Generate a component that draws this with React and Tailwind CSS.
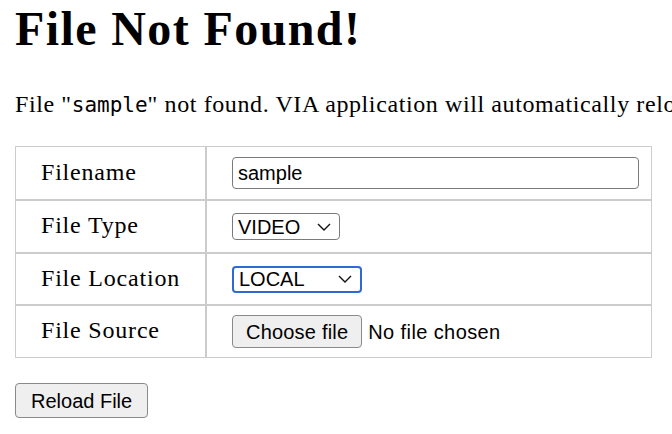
import React from 'react';

const serif = { fontFamily: '"Liberation Serif", "Times New Roman", serif' };

function Chevron() {
    return (
        <svg width="14" height="8" viewBox="0 0 14 8" fill="none" stroke="#111" strokeWidth="1.4">
            <path d="M1 1 L7 7 L13 1" />
        </svg>
    );
}

function FakeSelect({ value, width, focused }) {
    return (
        <div
            className={`flex items-center justify-between h-[27px] rounded-[4px] bg-white pl-[5px] pr-[8px] text-[20px] leading-none text-black ${
                focused ? 'border-2 border-[#2f6ad3]' : 'border border-[#7a7a7a]'
            } ${width}`}
        >
            <span>{value}</span>
            <Chevron />
        </div>
    );
}

export default function App() {
    const label = 'flex items-center bg-white pl-[25px] pb-[3px] text-[24px] leading-[28px] tracking-[0.8px]';
    const field = 'flex items-center bg-white pl-[25px]';

    return (
        <div className="w-[672px] h-[434px] overflow-hidden bg-white text-black px-[15px] pt-[5px]" style={serif}>
            <h1 className="text-[48px] leading-[48px] font-bold whitespace-nowrap tracking-[1.4px]">File Not Found!</h1>

            <p className="mt-[37px] text-[24px] leading-[28px] whitespace-nowrap tracking-[0.6px]">
                File "<span className="text-[21px] tracking-normal" style={{ fontFamily: '"DejaVu Sans Mono", monospace' }}>sample</span>" not found. VIA application will automatically relo
            </p>

            <div
                className="mt-[27px] w-[637px] grid grid-cols-[189px_1fr] grid-rows-[52px_51px_50px_51px] gap-[2px] bg-[#cccccc] border border-[#cccccc]"
                style={{ fontFamily: '"Liberation Sans", Arial, sans-serif' }}
            >
                <div className={label} style={serif}>Filename</div>
                <div className={field}>
                    <div className="w-[407px] h-[32px] flex items-center rounded-[4px] border border-[#7a7a7a] px-[5px] text-[20px] leading-none">
                        sample
                    </div>
                </div>

                <div className={label} style={serif}>File Type</div>
                <div className={field}>
                    <FakeSelect value="VIDEO" width="w-[108px]" />
                </div>

                <div className={label} style={serif}>File Location</div>
                <div className={field}>
                    <FakeSelect value="LOCAL" width="w-[130px]" focused />
                </div>

                <div className={label} style={serif}>File Source</div>
                <div className={`${field} gap-[6px] text-[20px] tracking-[0.4px]`}>
                    <button className="h-[33px] px-[13px] rounded-[4px] border border-[#8a8a8a] bg-[#efefef] text-[20px] leading-none tracking-[0.2px]">
                        Choose file
                    </button>
                    <span>No file chosen</span>
                </div>
            </div>

            <button
                className="mt-[25px] h-[35px] px-[15px] rounded-[4px] border border-[#8a8a8a] bg-[#efefef] text-[20px] leading-none"
                style={{ fontFamily: '"Liberation Sans", Arial, sans-serif' }}
            >
                Reload File
            </button>
        </div>
    );
}
